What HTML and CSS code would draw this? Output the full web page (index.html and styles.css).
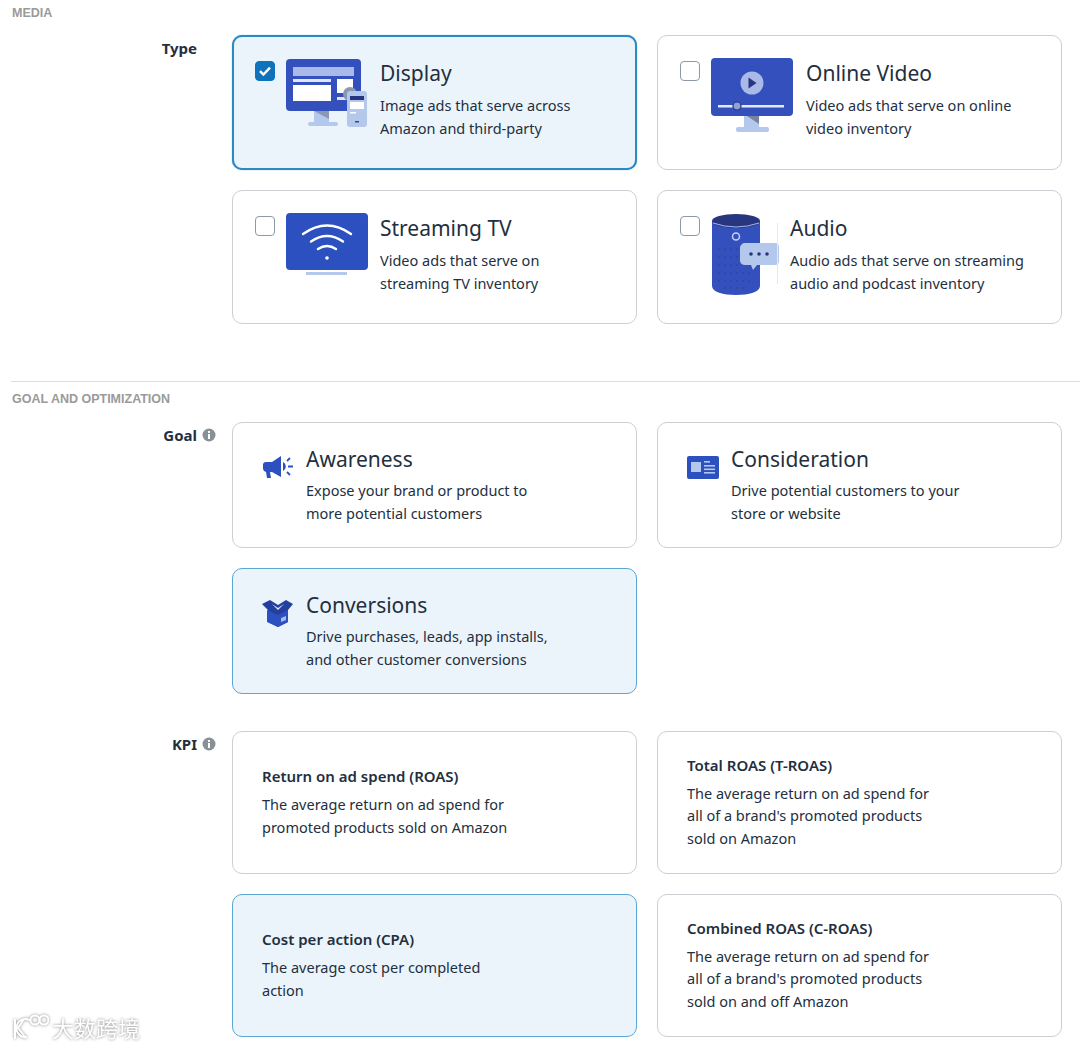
FILE: index.html
```html
<!DOCTYPE html>
<html lang="en">
<head>
<meta charset="UTF-8">
<title>Campaign media and goal</title>
<link rel="stylesheet" href="styles.css">
</head>
<body>

<h3 class="section-title media-title">MEDIA</h3>
<div class="field">
  <div class="field-label no-info">Type</div>
  <div class="cards media-cards">
    <div class="card media-card selected strong">
      <span class="check checked"><svg width="14" height="12" viewBox="0 0 14 12"><path d="M2 6.2l3.4 3.4L12 2.6" fill="none" stroke="#fff" stroke-width="2.4"/></svg></span>
      <svg class="pic" width="84" height="72" viewBox="0 0 84 72">
        <path d="M28 50h15v16H28z" fill="#b4c8ec"/>
        <path d="M28 53h15v8z" fill="#8b98b5"/>
        <rect x="22" y="64" width="30" height="4" rx="2" fill="#b4c8ec"/>
        <rect x="0" y="1" width="75" height="52" rx="4" fill="#3450bd"/>
        <rect x="7" y="9" width="61" height="9" fill="#a9b9e8"/>
        <rect x="7" y="21" width="38" height="3" fill="#dfe6f8"/>
        <rect x="7" y="27" width="38" height="16" fill="#fff"/>
        <rect x="51" y="21" width="16" height="14" fill="#fff"/>
        <rect x="51" y="39" width="16" height="3" fill="#dfe6f8"/>
        <circle cx="64" cy="36" r="7" fill="#8c96ad"/>
        <rect x="61" y="33" width="20" height="36" rx="3" fill="#b4c8ec"/>
        <rect x="64" y="38" width="14" height="4" fill="#28357f"/>
        <rect x="64" y="44" width="14" height="7" fill="#fff"/>
        <rect x="64" y="54" width="6" height="1.5" fill="#fff"/>
        <rect x="69" y="63" width="4" height="1.5" fill="#3c4a72"/>
      </svg>
      <div class="card-text">
        <h2>Display</h2>
        <p>Image ads that serve across<br>Amazon and third-party</p>
      </div>
    </div>
    <div class="card media-card">
      <span class="check"></span>
      <svg class="pic" width="85" height="75" viewBox="0 0 85 75">
        <path d="M33 56h15v14H33z" fill="#b4c8ec"/>
        <path d="M36 58h12v8z" fill="#78849f"/>
        <rect x="25" y="69" width="33" height="5" rx="2" fill="#b4c8ec"/>
        <rect x="0" y="0" width="82" height="58" rx="4" fill="#3450bd"/>
        <circle cx="41" cy="25" r="11.5" fill="#a9b9e8"/>
        <path d="M37.5 19.5v11l8-5.500z" fill="#28357f"/>
        <rect x="7" y="47" width="66" height="2.500" fill="#e4eaf9"/>
        <circle cx="26" cy="48" r="4" fill="#8f9fd8" stroke="#28357f" stroke-width="1.200"/>
      </svg>
      <div class="card-text">
        <h2>Online Video</h2>
        <p>Video ads that serve on online<br>video inventory</p>
      </div>
    </div>
    <div class="card media-card">
      <span class="check"></span>
      <svg class="pic" width="84" height="64" viewBox="0 0 84 64">
        <rect x="0" y="0" width="82" height="57" rx="4" fill="#2d50c0"/>
        <rect x="20" y="59" width="41" height="3" fill="#b4c8ec"/>
        <g fill="none" stroke="#fff" stroke-width="2.400" stroke-linecap="round">
          <path d="M17 21q24-17 48 0"/>
          <path d="M25 28.500q16-11 32 0"/>
          <path d="M32 36q9-6 18 0"/>
        </g>
        <circle cx="41" cy="45" r="1.800" fill="#fff"/>
      </svg>
      <div class="card-text">
        <h2>Streaming TV</h2>
        <p>Video ads that serve on<br>streaming TV inventory</p>
      </div>
    </div>
    <div class="card media-card">
      <span class="check"></span>
      <svg class="pic" width="69" height="84" viewBox="0 0 69 84">
        <path d="M1 8v65c0 6 11 9 24 9s24-3 24-9V8z" fill="#3450bd"/>
        <ellipse cx="25" cy="8" rx="24" ry="7" fill="#28357f"/>
        <path d="M2 10q23 8 46 0" fill="none" stroke="#a9b9e8" stroke-width="1"/>
        <circle cx="25" cy="23.500" r="3.500" fill="none" stroke="#c7d3f2" stroke-width="1.500"/>
        <g fill="#28408f">
          <circle cx="8" cy="36" r=".8"/><circle cx="14" cy="36" r=".8"/><circle cx="20" cy="36" r=".8"/><circle cx="26" cy="36" r=".8"/>
          <circle cx="8" cy="44" r=".8"/><circle cx="14" cy="44" r=".8"/><circle cx="20" cy="44" r=".8"/><circle cx="26" cy="44" r=".8"/>
          <circle cx="8" cy="52" r=".8"/><circle cx="14" cy="52" r=".8"/><circle cx="20" cy="52" r=".8"/><circle cx="26" cy="52" r=".8"/>
          <circle cx="8" cy="60" r=".8"/><circle cx="14" cy="60" r=".8"/><circle cx="20" cy="60" r=".8"/><circle cx="26" cy="60" r=".8"/><circle cx="32" cy="60" r=".8"/><circle cx="38" cy="60" r=".8"/>
          <circle cx="8" cy="68" r=".8"/><circle cx="14" cy="68" r=".8"/><circle cx="20" cy="68" r=".8"/><circle cx="26" cy="68" r=".8"/><circle cx="32" cy="68" r=".8"/><circle cx="38" cy="68" r=".8"/>
          <circle cx="14" cy="75" r=".8"/><circle cx="20" cy="75" r=".8"/><circle cx="26" cy="75" r=".8"/><circle cx="32" cy="75" r=".8"/>
        </g>
        <path d="M34 30h30a4 4 0 0 1 4 4v14a4 4 0 0 1-4 4H46l-4 5-2-5h-6a5 5 0 0 1-5-4V35a5 5 0 0 1 5-5z" fill="#b4c8ec"/>
        <circle cx="40" cy="41" r="1.800" fill="#28357f"/><circle cx="48" cy="41" r="1.800" fill="#28357f"/><circle cx="56" cy="41" r="1.800" fill="#28357f"/>
        <path d="M66.500 10v61" stroke="#e6e8eb" stroke-width="1"/>
      </svg>
      <div class="card-text">
        <h2>Audio</h2>
        <p>Audio ads that serve on streaming<br>audio and podcast inventory</p>
      </div>
    </div>
  </div>
</div>

<hr class="divider">

<h3 class="section-title">GOAL AND OPTIMIZATION</h3>
<div class="field">
  <div class="field-label">Goal <svg class="info" width="14" height="14" viewBox="0 0 14 14"><circle cx="7" cy="7" r="6.500" fill="#879196"/><rect x="6" y="6" width="2" height="5" fill="#fff"/><rect x="6" y="3" width="2" height="2" fill="#fff"/></svg></div>
  <div class="cards goal-cards">
    <div class="card goal-card">
      <svg class="mini" width="33" height="24" viewBox="0 0 33 24">
        <path d="M1 9a3 3 0 0 1 3-2h6l9-6v21l-9-5H8l1 6H5l-1-6a4 4 0 0 1-3-3z" fill="#2d50c0"/>
        <path d="M21 7a5 5 0 0 1 0 9z" fill="#2d50c0"/>
        <path d="M25 6l3-3M26 11.500h5M25 17l3 3" stroke="#2d50c0" stroke-width="1.800" fill="none"/>
      </svg>
      <div class="card-text">
        <h2>Awareness</h2>
        <p>Expose your brand or product to<br>more potential customers</p>
      </div>
    </div>
    <div class="card goal-card">
      <svg class="mini" width="33" height="24" viewBox="0 0 33 24">
        <rect x="0" y="1" width="32" height="23" rx="2" fill="#2d50c0"/>
        <rect x="4" y="7" width="10" height="10" fill="#b4c8ec"/>
        <rect x="17" y="6" width="6" height="1.600" fill="#b4c8ec"/>
        <rect x="17" y="10" width="11" height="1.600" fill="#b4c8ec"/>
        <rect x="17" y="13.500" width="11" height="1.600" fill="#b4c8ec"/>
        <rect x="17" y="17" width="11" height="1.600" fill="#b4c8ec"/>
      </svg>
      <div class="card-text">
        <h2>Consideration</h2>
        <p>Drive potential customers to your<br>store or website</p>
      </div>
    </div>
    <div class="card goal-card selected">
      <svg class="mini box" width="33" height="28" viewBox="0 0 33 28">
        <path d="M0 5l8-4 8 5 8-5 7 4-5 6v12l-10 5-10-5V11z" fill="#24409f"/>
        <path d="M5 11l11 5 10-5v12l-10 5-11-5z" fill="#2d50c0"/>
        <path d="M10 5l6 4 6-4-6 6z" fill="#dfe6f8"/>
        <path d="M19 19l5-2v4l-5 2z" fill="#a9b9e8"/>
      </svg>
      <div class="card-text">
        <h2>Conversions</h2>
        <p>Drive purchases, leads, app installs,<br>and other customer conversions</p>
      </div>
    </div>
  </div>
</div>

<div class="field kpi-field">
  <div class="field-label">KPI <svg class="info" width="14" height="14" viewBox="0 0 14 14"><circle cx="7" cy="7" r="6.500" fill="#879196"/><rect x="6" y="6" width="2" height="5" fill="#fff"/><rect x="6" y="3" width="2" height="2" fill="#fff"/></svg></div>
  <div class="cards kpi-cards">
    <div class="card kpi-card">
      <div>
        <h4>Return on ad spend (ROAS)</h4>
        <p>The average return on ad spend for<br>promoted products sold on Amazon</p>
      </div>
    </div>
    <div class="card kpi-card">
      <div>
        <h4>Total ROAS (T-ROAS)</h4>
        <p>The average return on ad spend for<br>all of a brand's promoted products<br>sold on Amazon</p>
      </div>
    </div>
    <div class="card kpi-card selected">
      <div>
        <h4>Cost per action (CPA)</h4>
        <p>The average cost per completed<br>action</p>
      </div>
    </div>
    <div class="card kpi-card">
      <div>
        <h4>Combined ROAS (C-ROAS)</h4>
        <p>The average return on ad spend for<br>all of a brand's promoted products<br>sold on and off Amazon</p>
      </div>
    </div>
  </div>
</div>

<!-- watermark on top of the screenshot -->
<div class="watermark">
  <svg width="40" height="28" viewBox="0 0 40 28" fill="none" stroke="#fff" stroke-width="2">
    <path d="M6 6v20M15 6L9 15l8 10"/>
    <path d="M22 8a9 9 0 1 0 -4 16"/>
    <circle cx="26" cy="7" r="4.500"/>
    <circle cx="35" cy="7" r="4.500"/>
  </svg>
  <span>大数跨境</span>
</div>

</body>
</html>
```

FILE: styles.css
```css
body {
  margin: 0;
  height: 1048px;
  overflow: hidden;
  position: relative;
  background-color: #fff;
  color: #232f3e;
  font-family: "Noto Sans", sans-serif;
}
h2, h3, h4, p {
  margin: 0;
}
.section-title {
  height: 40px;
  padding: 9px 0 0 12px;
  box-sizing: border-box;
  font-family: "Liberation Sans", sans-serif;
  font-size: 12.5px;
  line-height: 16px;
  font-weight: bold;
  color: #9a9a9a;
}
.media-title {
  height: 35px;
  padding-top: 5px;
}
.divider {
  height: 1px;
  margin: 57px 0 0 11px;
  border: none;
  background-color: #dcdfe0;
}
.field {
  display: flex;
}
.kpi-field {
  margin-top: 37px;
}
.field-label {
  width: 232px;
  flex: none;
  box-sizing: border-box;
  display: flex;
  justify-content: flex-end;
  align-items: center;
  align-self: flex-start;
  gap: 5px;
  padding: 2px 16px 0 0;
  font-size: 15px;
  line-height: 22px;
  font-weight: bold;
}
.no-info {
  padding-right: 35px;
}
.cards {
  display: grid;
  grid-template-columns: 405px 405px;
  column-gap: 20px;
}
.media-cards {
  grid-template-rows: 135px 134px;
  row-gap: 20px;
}
.goal-cards {
  grid-template-rows: 126px 126px;
  row-gap: 20px;
}
.kpi-cards {
  grid-template-rows: 143px 143px;
  row-gap: 20px;
}
.card {
  box-sizing: border-box;
  display: flex;
  border: 1px solid #ccd0d5;
  border-radius: 10px;
  background-color: #fff;
}
.card.selected {
  background-color: #ebf4fb;
  border-color: #5ba7d3;
}
.card.strong {
  border: 2px solid #2b8ac6;
  box-shadow: 0 0 1px #2b8ac6;
}
.card h2 {
  font-size: 21px;
  line-height: 28px;
  font-weight: 400;
}
.card p {
  font-size: 14.5px;
  line-height: 22.500px;
}
.media-card {
  align-items: flex-start;
  padding: 22px 0 0 22px;
}
.media-card.strong {
  padding: 21px 0 0 21px;
}
.media-card .card-text {
  margin-left: 10px;
  padding-top: 1px;
}
.media-card h2 {
  margin-bottom: 7px;
}
.check {
  box-sizing: border-box;
  width: 20px;
  height: 20px;
  flex: none;
  margin: 3px 11px 0 0;
  display: flex;
  align-items: center;
  justify-content: center;
  border: 1px solid #8d99a8;
  border-radius: 4px;
  background-color: #fff;
}
.check.checked {
  background-color: #0f73bb;
  border-color: #0f73bb;
}
.pic, .mini {
  flex: none;
}
.goal-card {
  align-items: flex-start;
  padding: 22px 0 0 29px;
}
.goal-card h2 {
  margin-bottom: 6px;
}
.mini {
  margin-top: 10px;
  margin-right: 11px;
}
.box {
  margin-top: 8px;
}
.kpi-card {
  align-items: center;
  padding: 0 0 2px 29px;
}
.kpi-card h4 {
  font-size: 15px;
  line-height: 22px;
  font-weight: 600;
  margin-bottom: 6px;
}
.watermark {
  position: absolute;
  left: 9px;
  top: 1013px;
  display: flex;
  align-items: center;
  gap: 3px;
  filter: drop-shadow(0 0 1.500px #8a8a8a);
}
.watermark span {
  font-family: "Noto Sans CJK SC", sans-serif;
  font-size: 22px;
  line-height: 28px;
  color: #fff;
}
```
